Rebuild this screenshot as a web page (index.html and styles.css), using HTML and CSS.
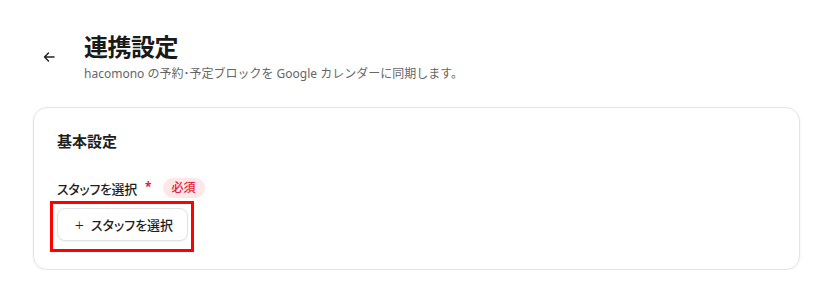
FILE: index.html
```html
<!DOCTYPE html>
<html lang="ja">
<head>
<meta charset="utf-8">
<link rel="stylesheet" href="styles.css">
</head>
<body>
<div class="page">
  <header class="head">
    <button class="back" aria-label="戻る">
      <svg width="12" height="12" viewBox="0 0 12 12" fill="none" stroke="#222" stroke-width="1.5" stroke-linecap="round" stroke-linejoin="round"><path d="M11 6H1.5M5.5 2L1.5 6l4 4"/></svg>
    </button>
    <div class="titles">
      <h1 class="title">連携設定</h1>
      <p class="sub">hacomono の予約･予定ブロックを Google カレンダーに同期します。</p>
    </div>
  </header>
  <section class="card">
    <h2 class="card-title">基本設定</h2>
    <div class="field">
      <div class="label-row">
        <span class="label">スタッフを選択</span>
        <span class="req">*</span>
        <span class="badge">必須</span>
      </div>
      <div class="btn-wrap">
        <button class="select-btn"><span class="plus">+</span>スタッフを選択</button>
        <span class="highlight"></span>
      </div>
    </div>
  </section>
</div>
</body>
</html>
```

FILE: styles.css
```css
* { box-sizing: border-box; }
html, body { margin: 0; padding: 0; background: #fff; }
body {
  font-family: "Noto Sans", "Noto Sans CJK JP", sans-serif;
  color: #1f1f1f;
}
.page { padding: 31px 21px 0 33px; }
.head {
  display: flex;
  align-items: flex-start;
  padding-left: 10px;
}
.back {
  border: 0;
  background: none;
  padding: 0;
  width: 12px;
  height: 12px;
  margin-top: 20px;
  margin-right: 29px;
  display: flex;
}
.titles { display: flex; flex-direction: column; }
.title {
  margin: 0;
  font-size: 24px;
  line-height: 32px;
  font-weight: 700;
  color: #1a1a1a;
  letter-spacing: -0.5px;
}
.sub {
  margin: 2px 0 0;
  font-size: 12px;
  line-height: 18px;
  color: #666;
}
.card {
  margin-top: 24px;
  border: 1px solid #e3e3e3;
  border-radius: 14px;
  box-shadow: 0 1px 3px rgba(0,0,0,0.06);
  padding: 21px 23px 27px;
  height: 163px;
}
.card-title {
  margin: 0;
  font-size: 15px;
  line-height: 24px;
  font-weight: 700;
  color: #1f1f1f;
}
.field { margin-top: 24px; }
.label-row {
  display: flex;
  align-items: center;
  height: 22px;
}
.label {
  font-size: 13px;
  font-weight: 500;
  color: #1f1f1f;
  font-feature-settings: "palt";
  letter-spacing: -0.3px;
}
.req {
  color: #e0203a;
  font-size: 12px;
  font-weight: 700;
  margin-left: 8px;
  line-height: 1;
  align-self: flex-start;
  margin-top: 4px;
}
.badge {
  margin-left: 11px;
  background: #fde7e9;
  color: #e0203a;
  font-size: 12px;
  font-weight: 500;
  border-radius: 11px;
  padding: 0 9px;
  height: 20px;
  line-height: 20px;
}
.btn-wrap {
  position: relative;
  display: inline-block;
  margin-top: 9px;
}
.select-btn {
  font-family: inherit;
  background: #fff;
  border: 1px solid #e2e2e2;
  border-radius: 8px;
  box-shadow: 0 1px 2px rgba(0,0,0,0.05);
  width: 131px;
  height: 33px;
  font-size: 13px;
  font-weight: 500;
  color: #1f1f1f;
  display: flex;
  align-items: center;
  justify-content: center;
  padding: 0 0 0 3px;
  font-feature-settings: "palt";
}
.plus { font-size: 16px; font-weight: 300; margin-right: 7px; line-height: 1; }
.highlight {
  position: absolute;
  left: -7px;
  top: -7px;
  width: 144px;
  height: 51px;
  border: 3px solid #ff0000;
  pointer-events: none;
}
```
